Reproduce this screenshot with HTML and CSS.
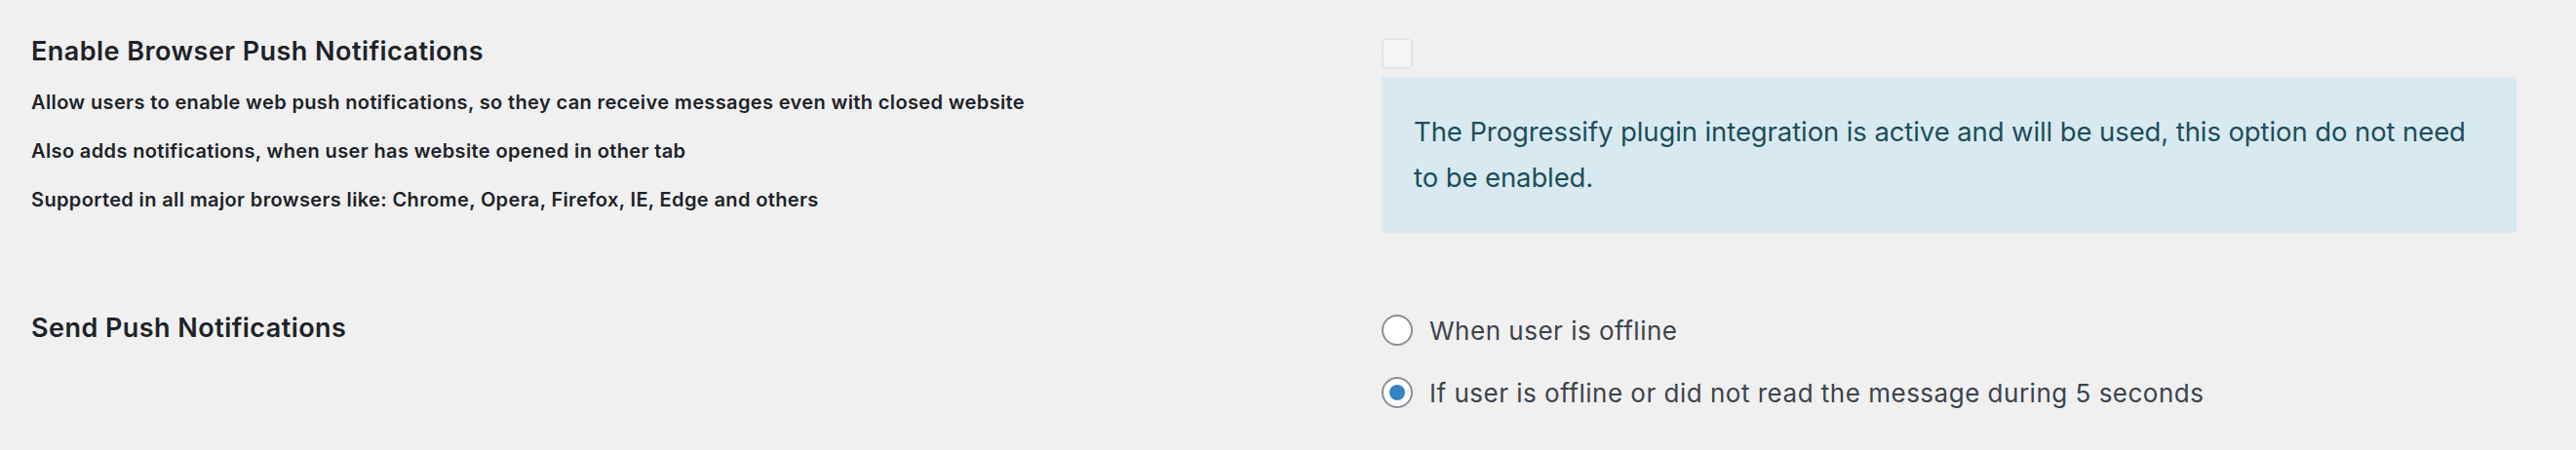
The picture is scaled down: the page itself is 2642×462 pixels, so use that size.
FILE: index.html
```html
<html>
  <head>
    <link rel="stylesheet" href="styles.css">
  </head>
  <body class="body">

    <div class="Settings">
      <div class="Settings-row">
        <div class="Settings-label">
          <h2 class="Settings-title">Enable Browser Push Notifications</h2>
          <p class="Settings-desc">Allow users to enable web push notifications, so they can receive messages even with closed website</p>
          <p class="Settings-desc">Also adds notifications, when user has website opened in other tab</p>
          <p class="Settings-desc">Supported in all major browsers like: Chrome, Opera, Firefox, IE, Edge and others</p>
        </div>
        <div class="Settings-field">
          <input type="checkbox" class="Checkbox" name="push_enabled" disabled />
          <div class="Notice">
            The Progressify plugin integration is active and will be used, this option do not need to be enabled.
          </div>
        </div>
      </div>

      <div class="Settings-row">
        <div class="Settings-label">
          <h2 class="Settings-title">Send Push Notifications</h2>
        </div>
        <div class="Settings-field">
          <label class="Radio">
            <input type="radio" name="push_mode" value="offline" />
            <span>When user is offline</span>
          </label>
          <label class="Radio">
            <input type="radio" name="push_mode" value="unread" checked />
            <span>If user is offline or did not read the message during 5 seconds</span>
          </label>
        </div>
      </div>
    </div>

  </body>
</html>
```

FILE: styles.css
```css
html, body {
  padding: 0;
  margin: 0;
  font-family: Inter, "Open Sans", sans-serif;
  background-color: #f0f0f1;
  color: #1d2327;
}

.Settings {
  padding: 36px 0 0 32px;
}
.Settings-row {
  display: flex;
  align-items: flex-start;
}
.Settings-row + .Settings-row {
  margin-top: 81px;
}
.Settings-label {
  width: 1385px;
  flex-shrink: 0;
}
.Settings-title {
  margin: 0;
  font-size: 27px;
  line-height: 34px;
  font-weight: 600;
  letter-spacing: 0.45px;
}
.Settings-desc {
  margin: 20px 0 0;
  font-size: 20px;
  line-height: 30px;
  font-weight: 600;
  letter-spacing: 0.37px;
}
.Settings-field {
  width: 1164px;
  display: flex;
  flex-direction: column;
  align-items: flex-start;
  padding-top: 3px;
}

.Checkbox {
  appearance: none;
  width: 32px;
  height: 32px;
  margin: 0;
  border: 2px solid #e4e4e5;
  border-radius: 6px;
  background-color: #f5f5f5;
}

.Notice {
  align-self: stretch;
  margin-top: 8px;
  padding: 33px 33px 33px 33px;
  background-color: #d8eaf0;
  color: #1e4d5a;
  font-size: 27.5px;
  line-height: 47px;
  letter-spacing: -0.1px;
}

.Radio {
  display: flex;
  align-items: center;
  gap: 17px;
  color: #3c434a;
  font-size: 26px;
  line-height: 32px;
  letter-spacing: 0.5px;
}
.Radio + .Radio {
  margin-top: 32px;
}
.Radio span {
  margin: 1px 0 -1px;
}
.Radio input {
  appearance: none;
  width: 32px;
  height: 32px;
  margin: 0;
  border: 2px solid #8c8f94;
  border-radius: 50%;
  background-color: #fff;
  display: flex;
  align-items: center;
  justify-content: center;
}
.Radio input:checked::before {
  content: "";
  width: 16px;
  height: 16px;
  border-radius: 50%;
  background-color: #3582c4;
}
```
